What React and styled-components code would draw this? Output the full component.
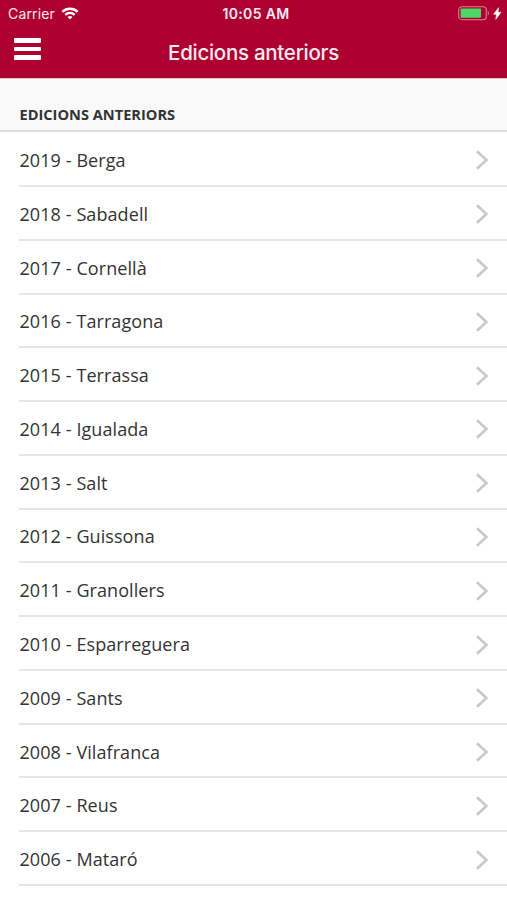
import styled, { createGlobalStyle } from "styled-components";

const GlobalStyle = createGlobalStyle`
    body {
        margin: 0;
        background-color: #ffffff;
        overflow: hidden;
    }
`
const Screen = styled.div`
    width: 100%;
    height: 900px;
    overflow: hidden;
    font-family: "Open Sans", "Noto Sans", sans-serif;
    color: #333333;
`
const Header = styled.header`
    box-sizing: border-box;
    height: 79px;
    border-bottom: 1px solid #e3c3cc;
    background-color: #ad0031;
    color: #fdeaf0;
    font-family: Inter, sans-serif;
`
const StatusBar = styled.div`
    display: grid;
    grid-template-columns: 1fr auto 1fr;
    align-items: center;
    height: 27px;
    padding: 0 5px 0 8px;
`
const Carrier = styled.div`
    display: flex;
    align-items: center;
    gap: 6px;
    font-size: 14px;
    letter-spacing: 0.15px;
`
const Clock = styled.div`
    padding-left: 2px;
    font-size: 14px;
    font-weight: 600;
    letter-spacing: 0.35px;
`
const Power = styled.div`
    display: flex;
    align-items: center;
    justify-content: flex-end;
    gap: 3px;
`
const NavBar = styled.div`
    display: grid;
    grid-template-columns: 60px 1fr 60px;
    align-items: center;
    height: 51px;
`
const MenuButton = styled.button`
    display: flex;
    flex-direction: column;
    gap: 4px;
    width: 27px;
    margin: 0 0 7px 14px;
    padding: 0;
    border: none;
    background: none;
`
const Bar = styled.span`
    height: 4.8px;
    border-radius: 1px;
    background-color: #ffffff;
`
const Title = styled.h1`
    margin: 0;
    text-align: center;
    font-size: 20.5px;
    font-weight: 500;
    line-height: 50px;
    letter-spacing: -0.28px;
`
const SectionHeader = styled.h2`
    box-sizing: border-box;
    height: 53px;
    margin: 0;
    padding: 25px 19.5px 0;
    border-bottom: 2px solid #dedede;
    background-color: #f9f9f9;
    font-size: 14.6px;
    font-weight: 700;
    line-height: 21px;
`
const List = styled.ul`
    margin: 0;
    padding: 0 0 0 19px;
    list-style: none;
`
const Row = styled.li`
    display: flex;
    align-items: center;
    justify-content: space-between;
    box-sizing: border-box;
    height: 53.77px;
    padding: 3px 18px 0 0;
    border-bottom: 2px solid #e6e6e6;
    font-size: 18px;
    letter-spacing: 0.08px;

    &:first-child {
        height: 55px;
    }
`
const Label = styled.span`
    padding: 0 0 1px 0.5px;
`

const edicions = [
    { any: 2019, lloc: "Berga" },
    { any: 2018, lloc: "Sabadell" },
    { any: 2017, lloc: "Cornellà" },
    { any: 2016, lloc: "Tarragona" },
    { any: 2015, lloc: "Terrassa" },
    { any: 2014, lloc: "Igualada" },
    { any: 2013, lloc: "Salt" },
    { any: 2012, lloc: "Guissona" },
    { any: 2011, lloc: "Granollers" },
    { any: 2010, lloc: "Esparreguera" },
    { any: 2009, lloc: "Sants" },
    { any: 2008, lloc: "Vilafranca" },
    { any: 2007, lloc: "Reus" },
    { any: 2006, lloc: "Mataró" },
]

const Wifi = () => (
    <svg width="18" height="13" viewBox="0 0 18 13" fill="none" stroke="#fff" strokeWidth="2.4">
        <path d="M1.3 4.9C5.6.7 12.4.7 16.7 4.9" />
        <path d="M4.3 7.9C7 5.4 11 5.4 13.7 7.9" />
        <path d="M9 12.4L6.5 9.9C7.9 8.6 10.1 8.6 11.5 9.9Z" fill="#fff" stroke="none" />
    </svg>
)

const Battery = () => (
    <svg width="32" height="15" viewBox="0 0 32 15">
        <rect x="0.7" y="0.7" width="27.6" height="13" rx="3.4" fill="none" stroke="#d7809a" strokeWidth="1.1" />
        <rect x="2.6" y="2.6" width="20.4" height="9.2" rx="1" fill="#4cd964" />
        <path d="M29.8 5.2C31.3 5.6 31.3 8.8 29.8 9.2Z" fill="#d7809a" />
    </svg>
)

const Bolt = () => (
    <svg width="9" height="13" viewBox="0 0 9 13">
        <path d="M5.6 0.7L0.7 7.2H3.6L2.8 12.3L8 5.3H5Z" fill="#fff" stroke="#fff" strokeWidth="0.6" />
    </svg>
)

const Chevron = () => (
    <svg width="14" height="20" viewBox="0 0 14 20" fill="none" stroke="#c9c9cb" strokeWidth="2.6">
        <path d="M2 1.2L11.4 10L2 18.8" />
    </svg>
)

const App = () => {
    return (
        <Screen>
            <GlobalStyle />
            <Header>
                <StatusBar>
                    <Carrier>Carrier <Wifi /></Carrier>
                    <Clock>10:05 AM</Clock>
                    <Power><Battery /><Bolt /></Power>
                </StatusBar>
                <NavBar>
                    <MenuButton aria-label="Menú">
                        <Bar />
                        <Bar />
                        <Bar />
                    </MenuButton>
                    <Title>Edicions anteriors</Title>
                </NavBar>
            </Header>
            <SectionHeader>EDICIONS ANTERIORS</SectionHeader>
            <List>
                {edicions.map((e) => (
                    <Row key={e.any}>
                        <Label>{e.any} - {e.lloc}</Label>
                        <Chevron />
                    </Row>
                ))}
            </List>
        </Screen>
    )
}

export default App;
